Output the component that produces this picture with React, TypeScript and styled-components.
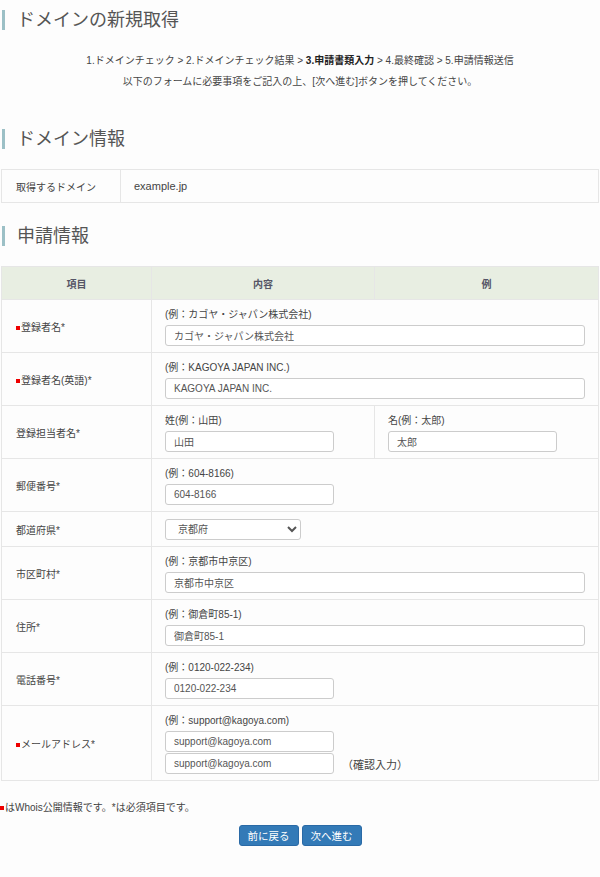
import React from "react";
import styled, { createGlobalStyle } from "styled-components";

const GlobalStyle = createGlobalStyle`
  body {
    margin: 0;
    background: #fdfdfd;
    font-family: "Liberation Sans", "Noto Sans CJK JP", sans-serif;
    font-size: 11px;
    color: #444;
  }
  * { box-sizing: border-box; }
`;

const Page = styled.div`
  width: 600px;
  padding: 10px 0 40px;
`;

const Heading = styled.h2<{ top?: number }>`
  margin: ${({ top }) => top ?? 0}px 0 0 2px;
  padding-left: 12px;
  border-left: 3px solid #9cc0c6;
  font-weight: normal;
  font-size: 18px;
  line-height: 20px;
  color: #555;
`;

const Steps = styled.div`
  margin-top: 20px;
  text-align: center;
  font-size: 10px;
  line-height: 21px;
  color: #444;
  b { color: #222; }
`;

const Table = styled.table<{ top: number }>`
  width: 598px;
  margin: ${({ top }) => top}px 0 0 1px;
  border-collapse: collapse;
  table-layout: fixed;
  td, th { border: 1px solid #e6e6e6; }
`;

const Label = styled.td<{ w?: number; h?: number }>`
  width: ${({ w }) => w ?? 150}px;
  padding: 0 14px;
  height: ${({ h }) => h ?? 53}px;
  font-size: 10px;
`;

const Cell = styled.td`
  padding: 6px 13px;
`;

const Head = styled.th<{ w?: number }>`
  ${({ w }) => (w ? `width: ${w}px;` : "")}
  background: #e8eee2;
  height: 33px;
  font-size: 10px;
  color: #556;
`;

const Mark = styled.span`
  display: inline-block;
  width: 4px;
  height: 4px;
  background: #e00;
  margin-right: 1px;
  vertical-align: middle;
`;

const Hint = styled.div`
  font-size: 10px;
  margin-bottom: 4px;
`;

const Input = styled.input<{ w: number }>`
  width: ${({ w }) => w}px;
  height: 21px;
  border: 1px solid #ccc;
  border-radius: 3px;
  padding: 0 8px;
  font: inherit;
  font-size: 10px;
  color: #555;
  background: #fff;
`;

const Select = styled.select`
  width: 136px;
  height: 21px;
  border: 1px solid #ccc;
  border-radius: 3px;
  padding: 0 8px;
  font: inherit;
  font-size: 10px;
  color: #555;
  background: #fff;
`;

const Line = styled.div`
  display: flex;
  align-items: center;
  gap: 8px;
  margin-top: 1px;
`;

const Note = styled.div`
  margin-top: 18px;
  font-size: 10px;
`;

const Buttons = styled.div`
  display: flex;
  justify-content: center;
  gap: 3px;
  margin-top: 11px;
`;

const Button = styled.button`
  height: 21px;
  padding: 0 8px;
  border: 1px solid #2a6aa6;
  border-radius: 3px;
  background: #337ab7;
  color: #fff;
  font: inherit;
  font-size: 10.5px;
`;

const Row: React.FC<{ label: string; mark?: boolean; children: React.ReactNode }> = ({ label, mark, children }) => (
  <tr>
    <Label>
      {mark && <Mark />}
      {label}*
    </Label>
    <Cell colSpan={2}>{children}</Cell>
  </tr>
);

export default function App() {
  return (
    <Page>
      <GlobalStyle />
      <Heading>ドメインの新規取得</Heading>
      <Steps>
        1.ドメインチェック &gt; 2.ドメインチェック結果 &gt; <b>3.申請書類入力</b> &gt; 4.最終確認 &gt; 5.申請情報送信
        <br />
        以下のフォームに必要事項をご記入の上、[次へ進む]ボタンを押してください。
      </Steps>
      <Heading top={37}>ドメイン情報</Heading>
      <Table top={20}>
        <tbody>
          <tr>
            <Label w={119} h={33}>取得するドメイン</Label>
            <Cell>example.jp</Cell>
          </tr>
        </tbody>
      </Table>
      <Heading top={23}>申請情報</Heading>
      <Table top={20}>
        <thead>
          <tr>
            <Head w={150}>項目</Head>
            <Head w={223}>内容</Head>
            <Head>例</Head>
          </tr>
        </thead>
        <tbody>
          <Row label="登録者名" mark>
            <Hint>(例：カゴヤ・ジャパン株式会社)</Hint>
            <Input w={420} defaultValue="カゴヤ・ジャパン株式会社" />
          </Row>
          <Row label="登録者名(英語)" mark>
            <Hint>(例：KAGOYA JAPAN INC.)</Hint>
            <Input w={420} defaultValue="KAGOYA JAPAN INC." />
          </Row>
          <tr>
            <Label>登録担当者名*</Label>
            <Cell>
              <Hint>姓(例：山田)</Hint>
              <Input w={169} defaultValue="山田" />
            </Cell>
            <Cell>
              <Hint>名(例：太郎)</Hint>
              <Input w={169} defaultValue="太郎" />
            </Cell>
          </tr>
          <Row label="郵便番号">
            <Hint>(例：604-8166)</Hint>
            <Input w={169} defaultValue="604-8166" />
          </Row>
          <tr>
            <Label h={35}>都道府県*</Label>
            <Cell colSpan={2}>
              <Select defaultValue="京都府">
                <option>京都府</option>
              </Select>
            </Cell>
          </tr>
          <Row label="市区町村">
            <Hint>(例：京都市中京区)</Hint>
            <Input w={420} defaultValue="京都市中京区" />
          </Row>
          <Row label="住所">
            <Hint>(例：御倉町85-1)</Hint>
            <Input w={420} defaultValue="御倉町85-1" />
          </Row>
          <Row label="電話番号">
            <Hint>(例：0120-022-234)</Hint>
            <Input w={169} defaultValue="0120-022-234" />
          </Row>
          <tr>
            <Label h={74}>
              <Mark />
              メールアドレス*
            </Label>
            <Cell colSpan={2}>
              <Hint>(例：support@kagoya.com)</Hint>
              <Input w={169} defaultValue="support@kagoya.com" />
              <Line>
                <Input w={169} defaultValue="support@kagoya.com" />
                <span>（確認入力）</span>
              </Line>
            </Cell>
          </tr>
        </tbody>
      </Table>
      <Note>
        <Mark />
        はWhois公開情報です。*は必須項目です。
      </Note>
      <Buttons>
        <Button>前に戻る</Button>
        <Button>次へ進む</Button>
      </Buttons>
    </Page>
  );
}
